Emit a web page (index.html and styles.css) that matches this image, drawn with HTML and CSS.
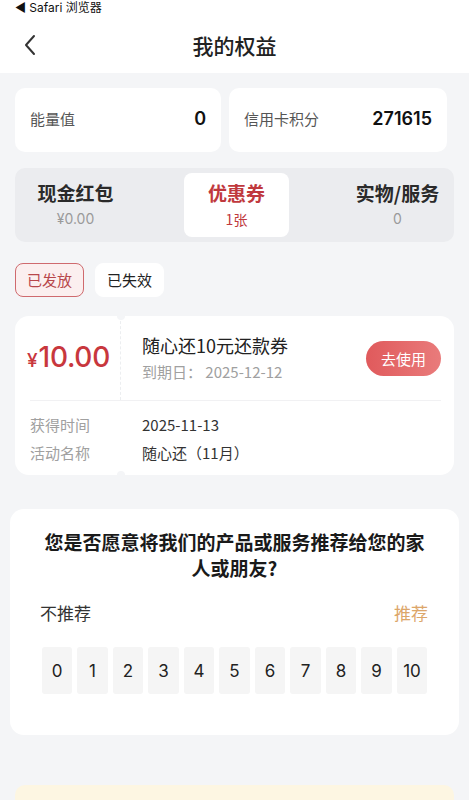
FILE: index.html
```html
<!DOCTYPE html>
<html lang="zh">
<head>
<meta charset="utf-8">
<title>我的权益</title>
<link rel="stylesheet" href="styles.css">
</head>
<body>
<header class="topbar">
  <div class="status">◀ Safari 浏览器</div>
  <div class="nav">
    <div class="back">
      <svg width="14" height="22" viewBox="0 0 14 22"><polyline points="11,2 3,11 11,20" fill="none" stroke="#333" stroke-width="2" stroke-linecap="round" stroke-linejoin="round"/></svg>
    </div>
    <h1 class="title">我的权益</h1>
    <div></div>
  </div>
</header>
<main class="main">
  <section class="stats">
    <div class="stat"><span class="stat-label">能量值</span><span class="stat-value">0</span></div>
    <div class="stat"><span class="stat-label">信用卡积分</span><span class="stat-value">271615</span></div>
  </section>
  <nav class="tabs">
    <div class="tab"><div class="tab-title">现金红包</div><div class="tab-sub">¥0.00</div></div>
    <div class="tab active"><div class="tab-title">优惠券</div><div class="tab-sub">1张</div></div>
    <div class="tab"><div class="tab-title">实物/服务</div><div class="tab-sub">0</div></div>
  </nav>
  <div class="chips">
    <span class="chip on">已发放</span>
    <span class="chip">已失效</span>
  </div>
  <article class="coupon">
    <div class="coupon-top">
      <div class="amount"><span class="yen">¥</span><span class="num">10.00</span></div>
      <div class="coupon-info">
        <div class="info-text">
          <div class="coupon-name">随心还10元还款券</div>
          <div class="coupon-date">到期日：&nbsp;2025-12-12</div>
        </div>
        <button class="use-btn">去使用</button>
      </div>
    </div>
    <div class="coupon-divider"></div>
    <dl class="coupon-meta">
      <dt>获得时间</dt><dd>2025-11-13</dd>
      <dt>活动名称</dt><dd>随心还（11月）</dd>
    </dl>
  </article>
  <section class="survey">
    <h2 class="survey-q">您是否愿意将我们的产品或服务推荐给您的家人或朋友?</h2>
    <div class="survey-ends"><span>不推荐</span><span class="rec">推荐</span></div>
    <div class="scores">
      <span class="score">0</span><span class="score">1</span><span class="score">2</span><span class="score">3</span><span class="score">4</span><span class="score">5</span><span class="score">6</span><span class="score">7</span><span class="score">8</span><span class="score">9</span><span class="score">10</span>
    </div>
  </section>
  <div class="notice"></div>
</main>
</body>
</html>
```

FILE: styles.css
```css
* { box-sizing: border-box; }
html, body { margin: 0; padding: 0; }
body {
  background: #f4f5f7;
  font-family: "Inter", "Noto Sans CJK SC", sans-serif;
  color: #222;
  width: 469px;
  overflow: hidden;
}
.topbar { background: #fff; height: 73px; }
.status {
  height: 16px;
  line-height: 16px;
  font-size: 12px;
  padding-left: 15px;
  color: #111;
}
.nav {
  height: 57px;
  display: grid;
  grid-template-columns: 60px 1fr 60px;
  align-items: center;
}
.back { padding-left: 23px; display: flex; align-items: center; }
.title {
  margin: 0;
  text-align: center;
  font-size: 21px;
  font-weight: 500;
  color: #222;
  font-family: "Noto Sans CJK SC", sans-serif;
}
.main { padding: 15px 15px 0; }
.stats { display: grid; grid-template-columns: 206px 218px; gap: 8px; }
.stat {
  background: #fff;
  border-radius: 10px;
  height: 64px;
  display: flex;
  align-items: center;
  justify-content: space-between;
  padding: 0 15px 2px 15px;
}
.stat-label { font-size: 15px; line-height: 20px; color: #555; font-family: "Noto Sans CJK SC", sans-serif; }
.stat-value { font-size: 18px; line-height: 20px; font-weight: 600; color: #111; }
.tabs {
  margin-top: 16px;
  height: 74px;
  background: #ebecef;
  border-radius: 10px;
  padding: 5px 4px 5px 8px;
  display: flex;
  justify-content: space-between;
}
.tab {
  width: 105px;
  border-radius: 8px;
  text-align: center;
  padding-top: 7px;
}
.tab.active { background: #fff; }
.tab-title {
  font-size: 19px;
  line-height: 26px;
  font-weight: 600;
  color: #2a2a2a;
  font-family: "Noto Sans CJK SC", sans-serif;
  white-space: nowrap;
}
.tab-sub { margin-top: 3px; font-size: 14px; line-height: 20px; color: #9a9a9a; }
.tab.active .tab-title, .tab.active .tab-sub { color: #c0393d; }
.tab.active .tab-sub { font-family: "Noto Sans CJK SC", sans-serif; }
.chips { margin-top: 21px; display: flex; gap: 11px; }
.chip {
  height: 34px;
  line-height: 32px;
  padding: 0 11px;
  border-radius: 8px;
  background: #fff;
  border: 1px solid #fff;
  font-size: 15px;
  color: #222;
  font-family: "Noto Sans CJK SC", sans-serif;
}
.chip.on { background: #fbefef; border-color: #cf6a6e; color: #b8474b; }
.coupon {
  margin-top: 19px;
  background: #fff;
  border-radius: 14px;
  position: relative;
}
.coupon::before, .coupon::after {
  content: "";
  position: absolute;
  left: 102px;
  width: 8px;
  height: 8px;
  border-radius: 50%;
  background: #f4f5f7;
}
.coupon::before { top: -4px; }
.coupon::after { bottom: -4px; }
.coupon-top { display: grid; grid-template-columns: 106px 1fr; height: 84px; }
.amount {
  display: flex;
  align-items: baseline;
  padding: 24px 0 0 12px;
  color: #c8373d;
  border-right: 1px dashed #eceef0;
}
.yen { font-size: 19px; font-weight: 500; margin-right: 1px; }
.num { font-size: 28px; font-weight: 500; letter-spacing: -0.3px; }
.coupon-info {
  display: flex;
  align-items: center;
  justify-content: space-between;
  padding: 0 13px 2px 21px;
}
.coupon-name { font-size: 18px; line-height: 26px; color: #222; font-family: "Noto Sans CJK SC", sans-serif; }
.coupon-date { font-size: 15px; line-height: 22px; margin-top: 3px; color: #a0a0a0; font-family: "Noto Sans CJK SC", sans-serif; }
.use-btn {
  width: 75px;
  height: 35px;
  border: 0;
  border-radius: 18px;
  background: linear-gradient(90deg, #e05a5c, #e97b7b);
  color: #fff;
  font-size: 15px;
  font-family: "Noto Sans CJK SC", sans-serif;
  padding: 0;
  margin-top: 2px;
}
.coupon-divider { height: 1px; background: #f1f1f3; margin: 0 13px 0 15px; }
.coupon-meta {
  margin: 0;
  display: grid;
  grid-template-columns: 112px 1fr;
  padding: 10px 15px 8px;
  font-size: 15px;
  line-height: 28px;
  font-family: "Noto Sans CJK SC", sans-serif;
}
.coupon-meta dt { color: #a0a0a0; }
.coupon-meta dd { margin: 0; color: #333; }
.survey {
  margin: 34px -5px 0;
  background: #fff;
  border-radius: 14px;
  padding: 20px 30px 41px;
}
.survey-q {
  margin: 0;
  text-align: center;
  font-size: 19px;
  line-height: 26px;
  font-weight: 700;
  color: #1a1a1a;
  font-family: "Noto Sans CJK SC", sans-serif;
}
.survey-ends {
  margin-top: 20px;
  display: flex;
  justify-content: space-between;
  font-size: 17px;
  line-height: 24px;
  color: #333;
  font-family: "Noto Sans CJK SC", sans-serif;
}
.survey-ends .rec { color: #dca66a; margin-right: 1px; }
.scores { margin-top: 22px; display: flex; justify-content: center; gap: 5px; }
.score {
  width: 30.5px;
  height: 47px;
  background: #f5f5f5;
  border-radius: 3px;
  display: flex;
  align-items: center;
  justify-content: center;
  font-size: 17px;
  color: #222;
}
.notice {
  margin-top: 50px;
  height: 60px;
  background: #fdf6e2;
  border-radius: 10px;
}
```
